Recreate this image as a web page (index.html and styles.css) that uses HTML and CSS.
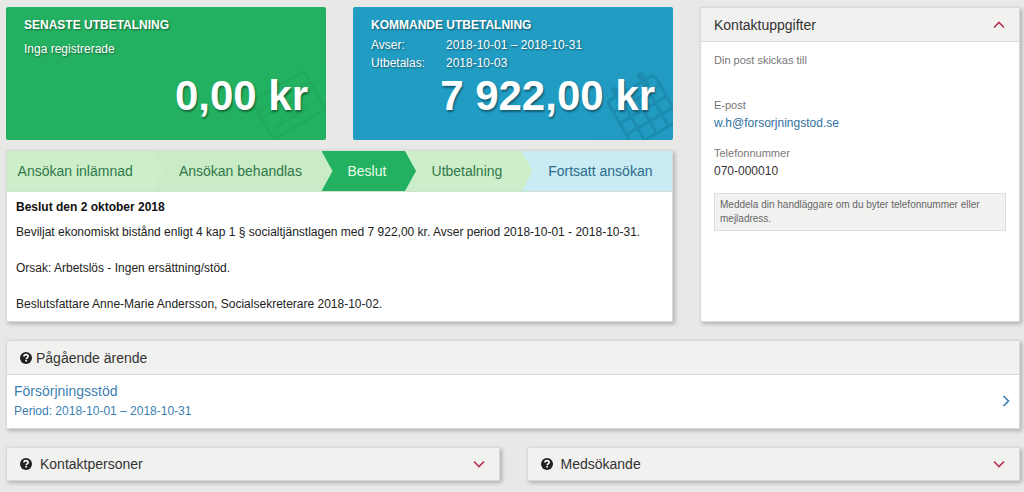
FILE: index.html
```html
<!DOCTYPE html>
<html lang="sv">
<head>
<meta charset="utf-8">
<meta name="viewport" content="width=device-width, initial-scale=1">
<title>Mina sidor</title>
<link rel="stylesheet" href="styles.css">
</head>
<body>
<svg class="sprite" aria-hidden="true">
  <symbol id="help" viewBox="0 0 12 12">
    <circle cx="6" cy="6" r="6" fill="#222"/>
    <path d="M4 4.6C4 3.2 5 2.7 6 2.7s2.1.6 2.1 1.8c0 1.400-1.900 1.400-1.900 2.700" fill="none" stroke="#fff" stroke-width="1.700"/>
    <path d="M5.300 8h1.700v1.600H5.300z" fill="#fff"/>
  </symbol>
  <symbol id="chevron" viewBox="0 0 12 12">
    <path d="M1 3.500l5 5 5-5" fill="none" stroke="currentColor" stroke-width="1.600"/>
  </symbol>
</svg>
<main class="page">
  <div class="top">
    <section class="tile tile-green">
      <h2 class="tile-title">SENASTE UTBETALNING</h2>
      <p class="tile-note">Inga registrerade</p>
      <p class="amount">0,00 kr</p>
      <svg class="tile-art" viewBox="0 0 76 72" aria-hidden="true">
        <g transform="rotate(-30 38 40)" fill="none" stroke="currentColor" stroke-width="3">
          <rect x="10" y="16" width="60" height="44" rx="3"/>
          <path d="M10 28h60M10 36h60M18 50h12M36 50h18"/>
        </g>
      </svg>
    </section>
    <section class="tile tile-blue">
      <h2 class="tile-title">KOMMANDE UTBETALNING</h2>
      <dl class="tile-facts">
        <dt>Avser:</dt><dd>2018-10-01 – 2018-10-31</dd>
        <dt>Utbetalas:</dt><dd>2018-10-03</dd>
      </dl>
      <p class="amount">7 922,00 kr</p>
      <svg class="tile-art" viewBox="0 0 76 72" aria-hidden="true">
        <g transform="rotate(-30 44 42)" fill="none" stroke="currentColor" stroke-width="3">
          <rect x="19" y="18" width="54" height="52" rx="3"/>
          <path d="M19 30h54M19 43h54M19 56h54M32 30v40M46 30v40M60 30v40"/>
          <path d="M31 12v11M61 12v11" stroke-width="7" stroke-linecap="round"/>
        </g>
      </svg>
    </section>
    <section class="card decision">
      <ol class="steps">
        <li class="step step-1">Ansökan inlämnad</li>
        <li class="step step-2">Ansökan behandlas</li>
        <li class="step step-3" aria-current="step">Beslut</li>
        <li class="step step-4">Utbetalning</li>
        <li class="step step-5">Fortsatt ansökan</li>
      </ol>
      <div class="decision-body">
        <h3 class="decision-title">Beslut den 2 oktober 2018</h3>
        <p>Beviljat ekonomiskt bistånd enligt 4 kap 1 § socialtjänstlagen med 7 922,00 kr. Avser period 2018-10-01 - 2018-10-31.</p>
        <p>Orsak: Arbetslös - Ingen ersättning/stöd.</p>
        <p>Beslutsfattare Anne-Marie Andersson, Socialsekreterare 2018-10-02.</p>
      </div>
    </section>
    <section class="card contact">
      <button class="bar bar-ruled" type="button" aria-expanded="true">
        <span>Kontaktuppgifter</span>
        <svg class="chev chev-up" aria-hidden="true"><use href="#chevron"/></svg>
      </button>
      <div class="contact-body">
        <div class="field field-post"><span class="label">Din post skickas till</span></div>
        <div class="field"><span class="label">E-post</span><a class="link" href="mailto:w.h@forsorjningstod.se">w.h@forsorjningstod.se</a></div>
        <div class="field"><span class="label">Telefonnummer</span><span>070-000010</span></div>
        <p class="hint">Meddela din handläggare om du byter telefonnummer eller mejladress.</p>
      </div>
    </section>
  </div>
  <section class="card">
    <h2 class="bar bar-ruled bar-tight"><svg class="help" aria-hidden="true"><use href="#help"/></svg><span>Pågående ärende</span></h2>
    <a class="case" href="#">
      <span class="case-text"><span class="case-name">Försörjningsstöd</span><span>Period: 2018-10-01 – 2018-10-31</span></span>
      <svg class="chev chev-right" aria-hidden="true"><use href="#chevron"/></svg>
    </a>
  </section>
  <div class="bottom">
    <button class="card bar" type="button" aria-expanded="false">
      <svg class="help" aria-hidden="true"><use href="#help"/></svg><span>Kontaktpersoner</span>
      <svg class="chev" aria-hidden="true"><use href="#chevron"/></svg>
    </button>
    <button class="card bar" type="button" aria-expanded="false">
      <svg class="help" aria-hidden="true"><use href="#help"/></svg><span>Medsökande</span>
      <svg class="chev" aria-hidden="true"><use href="#chevron"/></svg>
    </button>
  </div>
</main>
</body>
</html>
```
FILE: styles.css
```css
* { box-sizing: border-box; }
body {
  margin: 0;
  background: #e8e8e7;
  color: #333;
  font: 12px/18px "Liberation Sans", Arial, sans-serif;
}
h2, h3, p, dl, dd, ol { margin: 0; padding: 0; }
.sprite { position: absolute; width: 0; height: 0; }
.page { display: flex; flex-direction: column; gap: 18px; padding: 7px 4px 10px 6px; }

.top {
  display: grid;
  grid-template-columns: repeat(3, minmax(0, 1fr));
  grid-template-rows: auto 1fr;
  gap: 10px 27px;
}
.decision { grid-column: 1 / 3; grid-row: 2; }
.contact { grid-column: 3; grid-row: 1 / 3; }

.tile {
  position: relative;
  display: flex;
  flex-direction: column;
  min-height: 133px;
  padding: 9px 18px 22px;
  border-radius: 2px;
  overflow: hidden;
  color: #fff;
  text-shadow: 1px 1px 2px rgba(0, 0, 0, .45);
}
.tile-green { background: #23b161; }
.tile-blue { background: #219cc2; }
.tile-title { font-size: 12px; line-height: 18px; }
.tile-note { padding-top: 6px; }
.tile-facts { display: grid; grid-template-columns: 75px 1fr; padding-top: 2px; }
.amount {
  position: relative;
  z-index: 1;
  margin-top: auto;
  font-size: 42px;
  line-height: 44px;
  font-weight: bold;
  text-align: right;
  text-shadow: 1px 2px 2px rgba(0, 0, 0, .4);
}
.tile-art { position: absolute; right: 0; bottom: 0; width: 76px; height: 72px; }
.tile-green .tile-art { color: #075a2c; opacity: .08; }
.tile-blue .tile-art { color: #003850; opacity: .15; }

.card {
  background: #fff;
  border: 1px solid #d9d9d8;
  box-shadow: 2px 2px 4px rgba(0, 0, 0, .24);
}

.steps {
  display: flex;
  list-style: none;
  background: #cceec9;
  border-bottom: 1px solid #cfe3cf;
  font-size: 14px;
}
.step {
  display: flex;
  align-items: center;
  justify-content: center;
  min-width: 0;
  height: 40px;
  margin-left: -11px;
  padding: 0 15px 0 11px;
  background: #cceec9;
  color: #31784a;
  white-space: nowrap;
  clip-path: polygon(0 0, calc(100% - 11px) 0, 100% 50%, calc(100% - 11px) 100%, 0 100%, 11px 50%);
}
.step-1 { flex: 157 1 157px; margin-left: 0; padding: 0 20px 0 0; clip-path: polygon(0 0, calc(100% - 11px) 0, 100% 50%, calc(100% - 11px) 100%, 0 100%); }
.step-2 { flex: 181 1 181px; background: #c9ebc6; }
.step-3 { flex: 95 1 95px; background: #23b161; color: #e9fbe9; }
.step-4 { flex: 128 1 128px; }
.step-5 { flex: 151 1 151px; padding-right: 4px; background: #c9ebf3; color: #2c6c8c; clip-path: polygon(0 0, 100% 0, 100% 100%, 0 100%, 11px 50%); }

.decision-body { display: flex; flex-direction: column; gap: 18px; padding: 6px 9px 8px; color: #222; }
.decision-title { margin-bottom: -11px; font-size: 12px; line-height: 18px; color: #111; }

.bar {
  display: flex;
  align-items: center;
  gap: 8px;
  width: 100%;
  min-height: 34px;
  margin: 0;
  padding: 0 13px;
  background: #f1f1f0;
  color: #333;
  font: 14px/20px "Liberation Sans", Arial, sans-serif;
  text-align: left;
}
.bar-ruled { border: 0; border-bottom: 1px solid #dadada; }
.bar-tight { gap: 4px; }
.help { width: 12px; height: 12px; flex: none; }
.chev { width: 12px; height: 12px; flex: none; margin-left: auto; color: #b5344c; }
.bottom .chev, .contact .chev { margin-right: 1px; }
.chev-up { transform: rotate(180deg); }
.chev-right { transform: rotate(-90deg); color: #3a7cab; }

.contact-body { padding: 10px 13px; }
.field { display: flex; flex-direction: column; margin-bottom: 13px; }
.field-post { margin-bottom: 28px; }
.label { font-size: 11px; line-height: 17px; color: #777; }
.link { color: #2f6f9f; text-decoration: none; }
.hint {
  padding: 4px 4px 4px 5px;
  background: #f1f1f0;
  border: 1px solid #dcdcdb;
  color: #666;
  font-size: 10px;
  line-height: 14px;
}

.case {
  display: flex;
  align-items: center;
  padding: 6px 7px 7px;
  color: #3c7fb1;
  text-decoration: none;
}
.case-text { display: flex; flex-direction: column; line-height: 20px; }
.case-name { font-size: 14px; }

.bottom { display: grid; grid-template-columns: repeat(2, minmax(0, 1fr)); gap: 27px; }
```
